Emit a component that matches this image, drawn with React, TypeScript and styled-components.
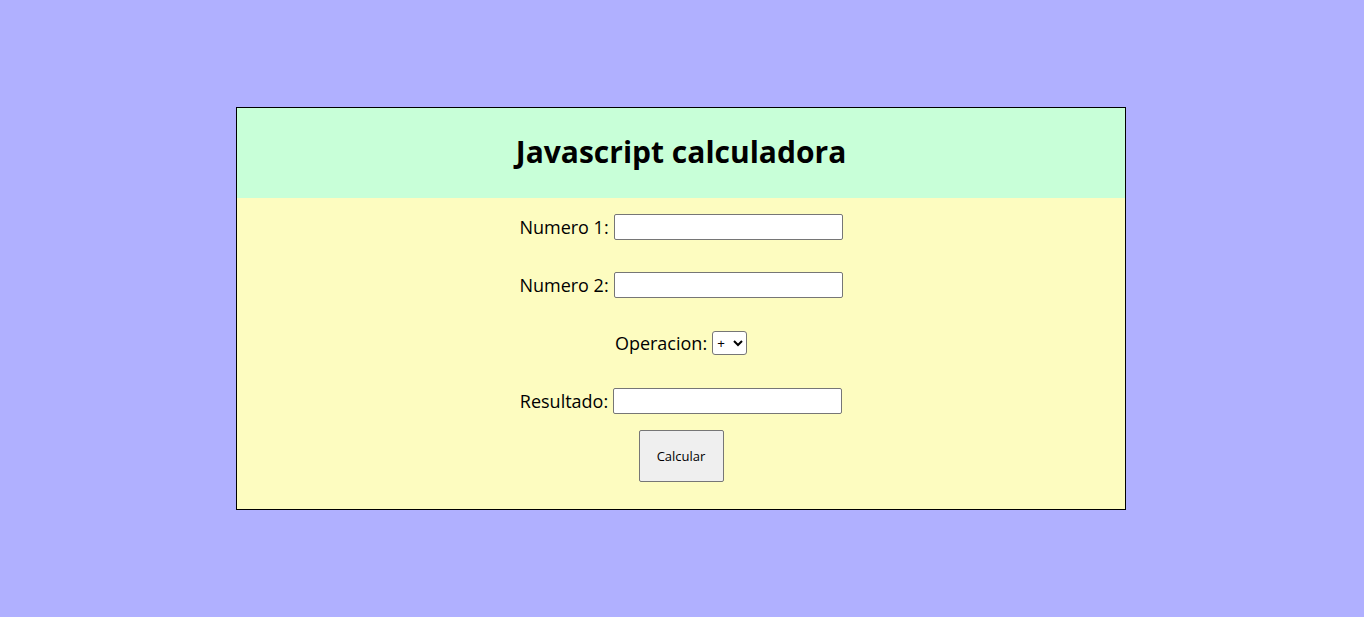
import styled, { createGlobalStyle } from "styled-components";

const GlobalStyle = createGlobalStyle`
  html, body {
    margin: 0;
    padding: 0;
    background: #b0b0ff;
    font-family: "Trebuchet MS", "Open Sans", "DejaVu Sans", sans-serif;
  }
`;

const Page = styled.div`
  padding: 107px 2px 0 0;
  display: flex;
  justify-content: center;
`;

const Calculator = styled.div`
  width: 888px;
  border: 1px solid #000;
  background: #fdfcc0;
`;

const Header = styled.div`
  background: #c8ffd8;
  height: 90px;
  display: flex;
  align-items: center;
  justify-content: center;
`;

const Title = styled.h1`
  margin: 0 0 3px;
  font-size: 30px;
  font-weight: bold;
  color: #000;
`;

const Form = styled.div`
  display: flex;
  flex-direction: column;
  align-items: center;
  padding: 16px 0 27px;
`;

const Row = styled.div<{ $gapAfter?: number }>`
  display: flex;
  align-items: center;
  gap: 5px;
  height: 26px;
  margin-bottom: ${(p) => p.$gapAfter ?? 32}px;
  font-size: 18px;
  color: #000;
`;

const Field = styled.input`
  width: 229px;
  height: 26px;
  box-sizing: border-box;
  border: 1px solid #767676;
  border-radius: 2px;
  background: #fff;
`;

const Select = styled.select`
  height: 24px;
  width: 35px;
  font-size: 13px;
  color: #000;
  border: 1px solid #767676;
  border-radius: 3px;
  background: #fff;
`;

const Button = styled.button`
  width: 85px;
  height: 52px;
  background: #efefef;
  border: 1px solid #767676;
  border-radius: 2px;
  font-family: inherit;
  font-size: 13px;
  color: #000;
`;

export default function App() {
  return (
    <>
      <GlobalStyle />
      <Page>
        <Calculator>
          <Header>
            <Title>Javascript calculadora</Title>
          </Header>
          <Form>
            <Row>
              <label>Numero 1:</label>
              <Field type="text" />
            </Row>
            <Row>
              <label>Numero 2:</label>
              <Field type="text" />
            </Row>
            <Row>
              <label>Operacion:</label>
              <Select defaultValue="+">
                <option>+</option>
                <option>-</option>
                <option>*</option>
                <option>/</option>
              </Select>
            </Row>
            <Row $gapAfter={16}>
              <label>Resultado:</label>
              <Field type="text" />
            </Row>
            <Button>Calcular</Button>
          </Form>
        </Calculator>
      </Page>
    </>
  );
}
